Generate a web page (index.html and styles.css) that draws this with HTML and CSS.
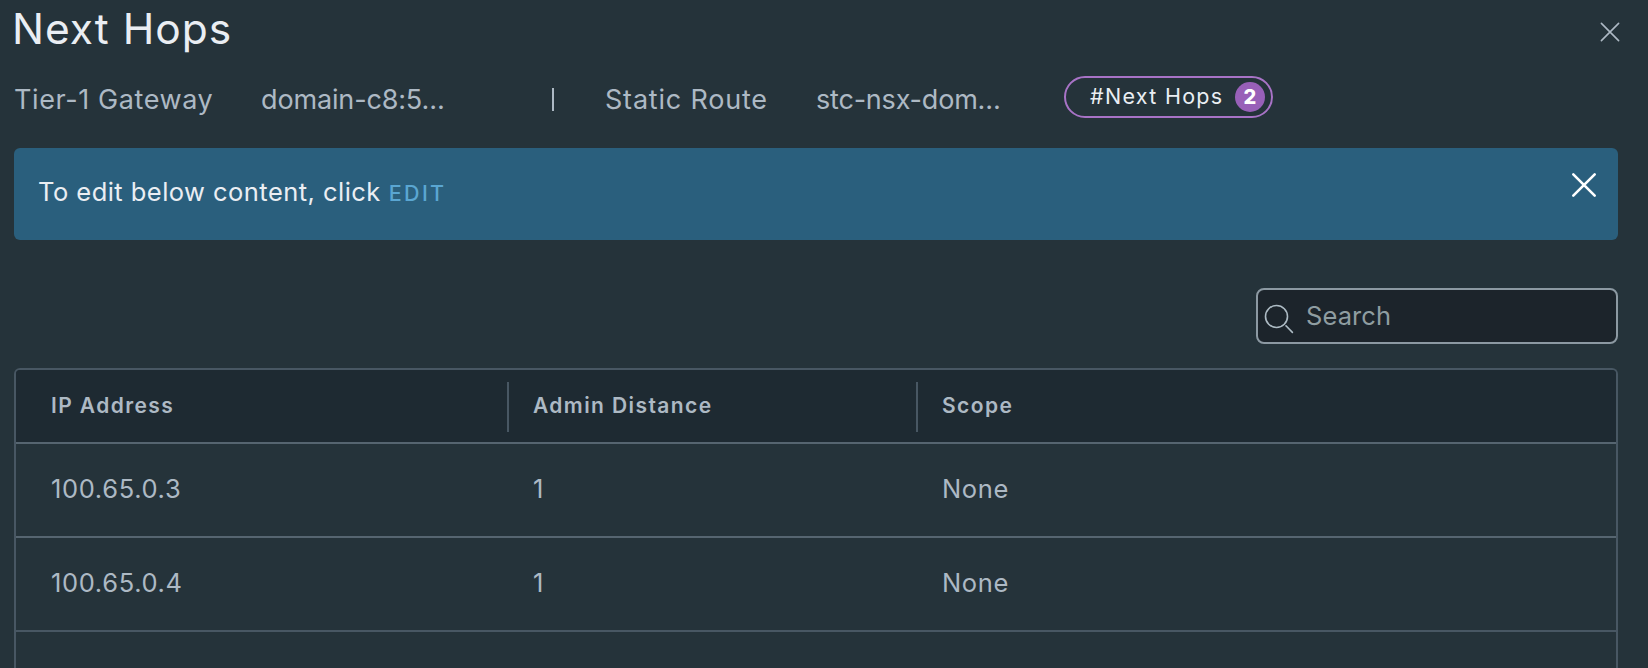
FILE: index.html
```html
<!DOCTYPE html>
<html lang="en">
<head>
<meta charset="utf-8">
<title>Next Hops</title>
<link rel="stylesheet" href="styles.css">
</head>
<body>
<main class="panel">
  <header class="panel-header">
    <h1 class="title">Next Hops</h1>
    <svg class="close" viewBox="0 0 20 20"><path d="M1.4 1.4 18.6 18.6M18.6 1.4 1.4 18.6"/></svg>
  </header>
  <div class="context">
    <span class="gateway">Tier-1 Gateway</span>
    <span class="domain">domain-c8:5…</span>
    <span class="divider"></span>
    <span class="route">Static Route</span>
    <span class="stc">stc-nsx-dom…</span>
    <span class="pill"><span class="pill-text">#Next Hops</span><span class="count">2</span></span>
  </div>
  <section class="banner">
    <span class="banner-text">To edit below content, click</span>
    <a class="edit">EDIT</a>
    <svg class="banner-close" viewBox="0 0 26 26"><path d="M2.3 2.3 23.7 23.7M23.7 2.3 2.3 23.7"/></svg>
  </section>
  <div class="toolbar">
    <div class="search">
      <svg class="search-icon" viewBox="0 0 30 30"><circle cx="12.5" cy="12.5" r="11"/><path d="m22 21.8 6.4 6.6"/></svg>
      <span class="placeholder">Search</span>
    </div>
  </div>
  <section class="grid">
    <div class="row head">
      <div class="cell">IP Address</div>
      <div class="cell">Admin Distance</div>
      <div class="cell">Scope</div>
    </div>
    <div class="row">
      <div class="cell">100.65.0.3</div>
      <div class="cell">1</div>
      <div class="cell">None</div>
    </div>
    <div class="row last">
      <div class="cell">100.65.0.4</div>
      <div class="cell">1</div>
      <div class="cell">None</div>
    </div>
  </section>
</main>
</body>
</html>
```
FILE: styles.css
```css
* { box-sizing: border-box; }

body {
  margin: 0;
  height: 668px;
  overflow: hidden;
  background: #25333a;
  color: #adb9c4;
  font-family: Inter, "Open Sans", sans-serif;
  font-size: 25.5px;
  white-space: nowrap;
}

svg { fill: none; stroke: currentColor; stroke-linecap: round; }

.panel {
  display: flex;
  flex-direction: column;
  height: 668px;
  padding: 0 30px 0 14px;
}

.panel-header {
  display: flex;
  justify-content: space-between;
  height: 72px;
}

.title {
  margin: 0 0 0 -2px;
  height: 58px;
  line-height: 58px;
  font-size: 42.5px;
  font-weight: 400;
  letter-spacing: 1px;
  color: #eaeef3;
}

.close { width: 20px; height: 20px; margin: 22px -2px 0 0; stroke-width: 1.6; }

.context {
  display: flex;
  height: 76px;
  line-height: 56px;
  font-size: 27px;
}

.gateway { width: 247px; letter-spacing: 0.6px; }
.domain { width: 291px; letter-spacing: -0.15px; }
.divider { width: 2px; height: 23px; margin-top: 16px; background: #adb9c4; }
.route { width: 211px; margin-left: 51px; letter-spacing: 0.8px; }
.stc { width: 248px; letter-spacing: -0.2px; }

.pill {
  display: flex;
  justify-content: space-between;
  width: 209px;
  height: 42px;
  margin-top: 4px;
  padding: 4px 6px 0 24px;
  border: 2px solid #a873c6;
  border-radius: 21px;
  color: #eaeef3;
  font-size: 21.5px;
}

.pill-text { line-height: 29px; letter-spacing: 1.3px; }

.count {
  width: 30px;
  height: 30px;
  border-radius: 50%;
  background: #9860b8;
  color: #fff;
  font-size: 20px;
  font-weight: 800;
  line-height: 30px;
  text-align: center;
}

.banner {
  display: flex;
  height: 92px;
  padding: 0 21px 0 24px;
  border-radius: 6px;
  background: #2a5f7d;
  line-height: 88px;
  color: #eaeef3;
}

.banner-text { letter-spacing: 0.46px; }

.edit { margin-left: 8px; font-size: 21.5px; font-weight: 500; line-height: 90px; letter-spacing: 2.3px; color: #5aa6d2; }

.banner-close { width: 26px; height: 26px; margin: 24px 0 0 auto; stroke-width: 2.6; color: #fff; }

.toolbar { display: flex; justify-content: flex-end; height: 128px; padding-top: 48px; }

.search {
  display: flex;
  width: 362px;
  height: 56px;
  border: 2px solid #8c99a2;
  border-radius: 8px;
  background: #1c242b;
  line-height: 51px;
  color: #8f9da1;
}

.search-icon { width: 30px; height: 30px; margin: 14px 12px 0 6px; stroke-width: 1.6; color: #adbbc4; }

.placeholder { letter-spacing: 0.1px; }

.grid {
  flex: 1;
  border: 2px solid #485763;
  border-bottom: 0;
  border-radius: 6px 6px 0 0;
}

.row {
  display: grid;
  grid-template-columns: 491px 409px 1fr;
  height: 94px;
  border-bottom: 2px solid #566570;
  line-height: 90px;
}

.row.last { border-color: #485763; }

.head {
  height: 74px;
  border-radius: 4px 4px 0 0;
  background: #1e2a32;
  font-size: 21px;
  font-weight: 600;
  line-height: 71px;
}

.cell { padding-left: 35px; letter-spacing: 0.65px; }
.cell + .cell { padding-left: 26px; }
.head .cell { letter-spacing: 1.4px; }
.head .cell + .cell { height: 50px; margin-top: 12px; line-height: 47px; border-left: 2px solid #485763; padding-left: 24px; }
```
